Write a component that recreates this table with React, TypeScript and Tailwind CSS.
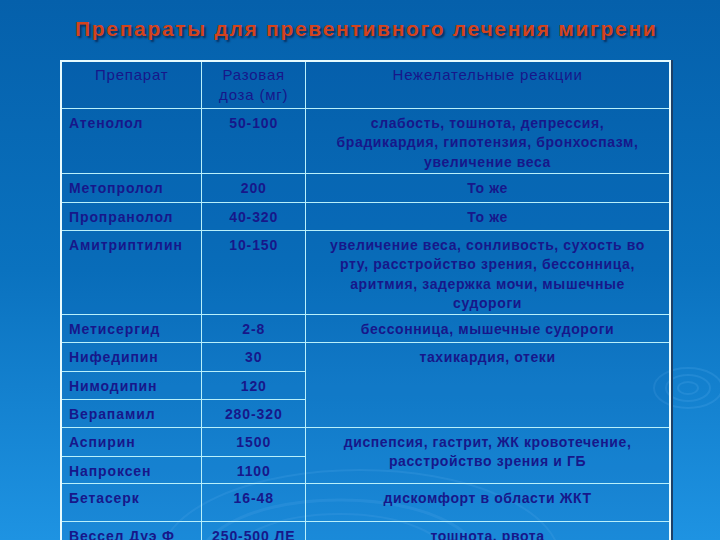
type Row = {
  name: string;
  dose: string;
  effect?: string[];
  span?: number;
  h: string;
};

const rows: Row[] = [
  {
    name: 'Атенолол',
    dose: '50-100',
    effect: ['слабость, тошнота, депрессия,', 'брадикардия, гипотензия, бронхоспазм,', 'увеличение веса'],
    h: 'h-[65px]',
  },
  { name: 'Метопролол', dose: '200', effect: ['То же'], h: 'h-[29px]' },
  { name: 'Пропранолол', dose: '40-320', effect: ['То же'], h: 'h-[28px]' },
  {
    name: 'Амитриптилин',
    dose: '10-150',
    effect: ['увеличение веса, сонливость, сухость во', 'рту, расстройство зрения, бессонница,', 'аритмия, задержка мочи, мышечные', 'судороги'],
    h: 'h-[84px]',
  },
  { name: 'Метисергид', dose: '2-8', effect: ['бессонница, мышечные судороги'], h: 'h-[28px]' },
  { name: 'Нифедипин', dose: '30', effect: ['тахикардия, отеки'], span: 3, h: 'h-[29px]' },
  { name: 'Нимодипин', dose: '120', h: 'h-[28px]' },
  { name: 'Верапамил', dose: '280-320', h: 'h-[28px]' },
  {
    name: 'Аспирин',
    dose: '1500',
    effect: ['диспепсия, гастрит, ЖК кровотечение,', 'расстройство зрения и ГБ'],
    span: 2,
    h: 'h-[29px]',
  },
  { name: 'Напроксен', dose: '1100', h: 'h-[27px]' },
  { name: 'Бетасерк', dose: '16-48', effect: ['дискомфорт в области ЖКТ'], h: 'h-[38px]' },
  { name: 'Вессел Дуэ Ф', dose: '250-500 ЛЕ', effect: ['тошнота, рвота'], h: 'h-[40px]' },
];

const cell = 'border border-[#b8f0fb] align-top pt-[5px] leading-[19.5px]';
const head = 'border border-[#b8f0fb] align-top pt-[3px] leading-[19.5px] font-normal text-[15px] tracking-[0.8px]';

export default function App() {
  return (
    <div className="relative w-[720px] h-[540px] overflow-hidden bg-gradient-to-b from-[#0560ab] via-[#0a72bf] to-[#1e93e2] font-['Liberation_Sans',Arial,sans-serif]">
      <svg className="absolute left-0 top-0 pointer-events-none" width="720" height="540">
        <g fill="none" stroke="#7cc8ff" strokeOpacity="0.14">
          <ellipse cx="688" cy="388" rx="34" ry="20" strokeWidth="2" />
          <ellipse cx="688" cy="388" rx="22" ry="13" strokeWidth="2" />
          <ellipse cx="688" cy="388" rx="10" ry="6" strokeWidth="2" />
          <ellipse cx="340" cy="560" rx="140" ry="60" strokeWidth="3" />
          <ellipse cx="340" cy="560" rx="110" ry="46" strokeWidth="2" />
          <ellipse cx="360" cy="560" rx="200" ry="90" strokeWidth="2" />
        </g>
      </svg>

      <div className="relative flex flex-col">
        <h1 className="h-[60px] pt-[13px] pl-[75px] text-[21px] font-bold tracking-[1.7px] text-[#d4431c] [text-shadow:2px_2px_2px_#0b2e5c]">
          Препараты для превентивного лечения мигрени
        </h1>

        <table className="ml-[60px] w-[611px] border-collapse border-2 border-[#e6fbff] bg-[#003c8c]/10 text-[14px] text-[#17178a] shadow-[2px_0_0_#1d3f66]">
          <colgroup>
            <col className="w-[141px]" />
            <col className="w-[104px]" />
            <col className="w-[366px]" />
          </colgroup>
          <thead>
            <tr className="h-[47px]">
              <th className={head}>Препарат</th>
              <th className={head}>
                Разовая
                <br />
                доза (мг)
              </th>
              <th className={head}>Нежелательные реакции</th>
            </tr>
          </thead>
          <tbody className="font-bold tracking-[0.9px]">
            {rows.map((r) => (
              <tr key={r.name} className={r.h}>
                <td className={`${cell} pl-[7px] text-left`}>{r.name}</td>
                <td className={`${cell} text-center`}>{r.dose}</td>
                {r.effect && (
                  <td rowSpan={r.span ?? 1} className={`${cell} text-center tracking-[0.6px]`}>
                    {r.effect.map((line) => (
                      <div key={line}>{line}</div>
                    ))}
                  </td>
                )}
              </tr>
            ))}
          </tbody>
        </table>
      </div>
    </div>
  );
}
